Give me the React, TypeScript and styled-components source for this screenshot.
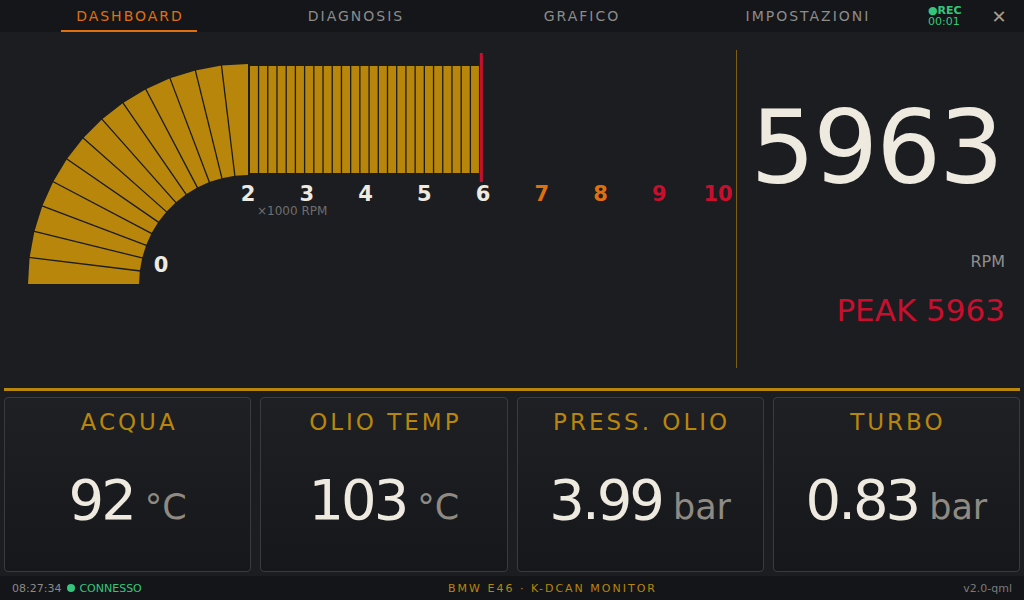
import React from "react";
import styled, { createGlobalStyle } from "styled-components";

const GOLD = "#b8860b";
const RED = "#c8102e";
const ORANGE = "#e0700e";
const CREAM = "#eeeae0";
const GREEN = "#35c67c";
const BG = "#1c1d21";

const GlobalStyle = createGlobalStyle`
  html, body {
    margin: 0;
    padding: 0;
    background: ${BG};
  }
  body {
    font-family: "DejaVu Sans", "Liberation Sans", sans-serif;
  }
`;

const Screen = styled.div`
  width: 1024px;
  height: 600px;
  display: flex;
  flex-direction: column;
  overflow: hidden;
  background: ${BG};
  color: ${CREAM};
`;

const TopBar = styled.div`
  height: 32px;
  flex-shrink: 0;
  display: flex;
  align-items: stretch;
  padding-left: 16px;
  background: #151619;
`;

const Tab = styled.div<{ $active?: boolean }>`
  width: 226px;
  position: relative;
  display: flex;
  align-items: center;
  justify-content: center;
  padding-left: 2px;
  box-sizing: border-box;
  font-size: 14px;
  letter-spacing: 2px;
  color: ${(p) => (p.$active ? ORANGE : "#8c8c8c")};
  &::after {
    content: "";
    display: ${(p) => (p.$active ? "block" : "none")};
    position: absolute;
    left: 45px;
    right: 45px;
    bottom: 0;
    height: 2px;
    background: ${ORANGE};
  }
`;

const Rec = styled.div`
  margin-left: 8px;
  display: flex;
  flex-direction: column;
  justify-content: center;
  font-size: 11px;
  line-height: 11px;
  color: ${GREEN};
  span:first-child {
    font-weight: bold;
  }
`;

const Close = styled.div`
  margin-left: auto;
  width: 40px;
  margin-right: 5px;
  display: flex;
  align-items: center;
  justify-content: center;
  font-size: 18px;
  color: #9c9c9c;
`;

const Main = styled.div`
  height: 354px;
  flex-shrink: 0;
  display: flex;
`;

const GaugeArea = styled.div`
  width: 736px;
  flex-shrink: 0;
  svg {
    display: block;
  }
`;

const Divider = styled.div`
  width: 1px;
  margin: 18px 0;
  background: #7d5e14;
`;

const Readout = styled.div`
  flex: 1;
  display: flex;
  flex-direction: column;
  align-items: flex-end;
  padding: 65px 19px 0 0;
`;

const BigRpm = styled.div`
  font-size: 102px;
  line-height: 1;
  letter-spacing: -2px;
  margin-right: 3px;
  color: ${CREAM};
`;

const RpmUnit = styled.div`
  margin-top: 55px;
  font-size: 16px;
  line-height: 1;
  color: #8e8e8e;
`;

const Peak = styled.div`
  margin-top: 25px;
  font-size: 31px;
  line-height: 1;
  color: ${RED};
`;

const GoldRule = styled.div`
  height: 3px;
  margin: 2px 4px 0;
  flex-shrink: 0;
  background: ${GOLD};
`;

const Cards = styled.div`
  height: 175px;
  flex-shrink: 0;
  display: grid;
  grid-template-columns: repeat(4, 1fr);
  gap: 9px;
  padding: 6px 4px 0;
`;

const Card = styled.div`
  border: 1px solid #3a3b3f;
  border-radius: 4px;
  background: linear-gradient(180deg, #1f2024 0%, #16171a 100%);
  display: flex;
  flex-direction: column;
  align-items: center;
  padding-top: 11px;
`;

const CardLabel = styled.div`
  font-size: 23px;
  line-height: 1.2;
  letter-spacing: 3px;
  padding-left: 3px;
  color: ${GOLD};
`;

const ValueRow = styled.div`
  margin-top: 35px;
  display: flex;
  align-items: baseline;
  gap: 11px;
`;

const Value = styled.span`
  font-size: 56px;
  line-height: 1;
  letter-spacing: -3px;
  color: ${CREAM};
`;

const Unit = styled.span`
  font-size: 35px;
  line-height: 1;
  color: #8f8a82;
`;

const Footer = styled.div`
  flex: 1;
  margin-top: 4px;
  display: flex;
  align-items: center;
  justify-content: space-between;
  padding: 0 12px;
  background: #141518;
  font-size: 11px;
`;

const Status = styled.div`
  display: flex;
  align-items: center;
  gap: 6px;
  color: #8a8a8a;
`;

const Connected = styled.span`
  display: flex;
  align-items: center;
  gap: 4px;
  color: ${GREEN};
  &::before {
    content: "";
    width: 8px;
    height: 8px;
    border-radius: 50%;
    background: ${GREEN};
  }
`;

const Brand = styled.div`
  letter-spacing: 2px;
  color: ${GOLD};
`;

const Version = styled.div`
  color: #7a7a7a;
`;

// gauge geometry, in page coordinates (svg viewBox starts at y = 32)
const CX = 248;
const CY = 284;
const R_OUT = 220;
const R_IN = 109;
const ARC_SEGMENTS = 13;
const BAR_COUNT = 25;
const PX_PER_K = 58.75;

const pt = (r: number, deg: number) => {
  const a = (deg * Math.PI) / 180;
  return [CX - r * Math.cos(a), CY - r * Math.sin(a)];
};

const ticks = [
  { label: "2", x: CX, color: CREAM },
  { label: "3", x: CX + PX_PER_K, color: CREAM },
  { label: "4", x: CX + PX_PER_K * 2, color: CREAM },
  { label: "5", x: CX + PX_PER_K * 3, color: CREAM },
  { label: "6", x: CX + PX_PER_K * 4, color: CREAM },
  { label: "7", x: CX + PX_PER_K * 5, color: ORANGE },
  { label: "8", x: CX + PX_PER_K * 6, color: ORANGE },
  { label: "9", x: CX + PX_PER_K * 7, color: RED },
  { label: "10", x: CX + PX_PER_K * 8, color: RED },
];

const RpmGauge: React.FC<{ rpm: number }> = ({ rpm }) => {
  const step = 90 / ARC_SEGMENTS;
  const segs = Array.from({ length: ARC_SEGMENTS }, (_, i) => {
    const a0 = i * step;
    const a1 = (i + 1) * step;
    return [pt(R_OUT, a0), pt(R_OUT, a1), pt(R_IN, a1), pt(R_IN, a0)]
      .map((p) => p.map((n) => n.toFixed(1)).join(","))
      .join(" ");
  });
  const gaps = Array.from({ length: ARC_SEGMENTS - 1 }, (_, i) => {
    const a = (i + 1) * step;
    return [pt(R_IN - 1, a), pt(R_OUT + 1, a)];
  });
  const needleX = CX + ((rpm - 2000) / 1000) * PX_PER_K;

  return (
    <svg width="736" height="354" viewBox="0 32 736 354">
      {segs.map((s, i) => (
        <polygon key={i} points={s} fill={GOLD} />
      ))}
      {gaps.map(([a, b], i) => (
        <line key={i} x1={a[0]} y1={a[1]} x2={b[0]} y2={b[1]} stroke={BG} strokeWidth="1.3" />
      ))}
      {Array.from({ length: BAR_COUNT }, (_, j) => (
        <rect key={j} x={250 + j * 9.21} y="66" width="7.9" height="107" fill={GOLD} />
      ))}
      <rect x={needleX - 1} y="53" width="3" height="129" fill={RED} />
      <g fontFamily="DejaVu Sans, sans-serif" fontWeight="bold" fontSize="21" textAnchor="middle">
        <text x="161" y="272" fill={CREAM}>0</text>
        {ticks.map((t) => (
          <text key={t.label} x={t.x.toFixed(1)} y="201" fill={t.color}>
            {t.label}
          </text>
        ))}
      </g>
      <text x="257" y="215" fontFamily="DejaVu Sans, sans-serif" fontSize="12" fill="#6e6e6e">
        ×1000 RPM
      </text>
    </svg>
  );
};

const tabs = ["DASHBOARD", "DIAGNOSIS", "GRAFICO", "IMPOSTAZIONI"];

const gauges = [
  { label: "ACQUA", value: "92", unit: "°C" },
  { label: "OLIO TEMP", value: "103", unit: "°C" },
  { label: "PRESS. OLIO", value: "3.99", unit: "bar" },
  { label: "TURBO", value: "0.83", unit: "bar" },
];

const App: React.FC = () => {
  const rpm = 5963;
  return (
    <>
      <GlobalStyle />
      <Screen>
        <TopBar>
          {tabs.map((t, i) => (
            <Tab key={t} $active={i === 0}>
              {t}
            </Tab>
          ))}
          <Rec>
            <span>●REC</span>
            <span>00:01</span>
          </Rec>
          <Close>✕</Close>
        </TopBar>
        <Main>
          <GaugeArea>
            <RpmGauge rpm={rpm} />
          </GaugeArea>
          <Divider />
          <Readout>
            <BigRpm>{rpm}</BigRpm>
            <RpmUnit>RPM</RpmUnit>
            <Peak>PEAK {rpm}</Peak>
          </Readout>
        </Main>
        <GoldRule />
        <Cards>
          {gauges.map((g) => (
            <Card key={g.label}>
              <CardLabel>{g.label}</CardLabel>
              <ValueRow>
                <Value>{g.value}</Value>
                <Unit>{g.unit}</Unit>
              </ValueRow>
            </Card>
          ))}
        </Cards>
        <Footer>
          <Status>
            <span>08:27:34</span>
            <Connected>CONNESSO</Connected>
          </Status>
          <Brand>BMW E46 · K-DCAN MONITOR</Brand>
          <Version>v2.0-qml</Version>
        </Footer>
      </Screen>
    </>
  );
};

export default App;
